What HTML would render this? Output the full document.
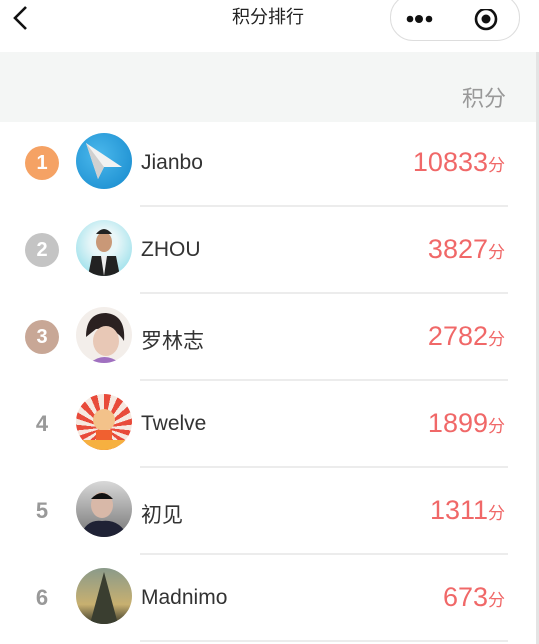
<!DOCTYPE html>
<html><head><meta charset="utf-8"><style>
body{margin:0;width:539px;height:644px;overflow:hidden;background:#fff;font-family:"Liberation Sans","Noto Sans CJK SC",sans-serif;position:relative}
.hdr{position:absolute;top:0;left:0;width:536px;height:52px;background:#fff}
.title{position:absolute;top:3px;left:0;width:536px;text-align:center;font-size:18px;color:#222}
.cap{position:absolute;left:390px;top:-6px;width:128px;height:45px;border:1px solid #ddd;border-radius:23px;background:#fff}
.band{position:absolute;top:52px;left:0;width:536px;height:70px;background:#f4f6f5}
.band span{position:absolute;right:30px;top:29px;font-size:22px;color:#999}
.rb{position:absolute;right:0;top:52px;width:3px;height:592px;background:#e4e4e4}
.row{position:absolute;left:0;width:536px;height:87px}
.badge{position:absolute;left:25px;top:26px;width:34px;height:34px;border-radius:50%;color:#fff;font-weight:bold;font-size:20px;text-align:center;line-height:34px}
.num{position:absolute;left:25px;top:26px;width:34px;text-align:center;line-height:34px;font-size:22px;font-weight:bold;color:#999}
.av{position:absolute;left:76px;top:13px;width:56px;height:56px;border-radius:50%;overflow:hidden}
.name{position:absolute;left:141px;top:31px;font-size:21px;color:#333}
.sc{position:absolute;right:31px;top:27px;font-size:27px;color:#f06868}
.sc small{font-size:17px}
.line{position:absolute;left:140px;width:368px;bottom:0;height:2px;background:#ececec}
</style></head><body>
<div class="hdr">
<svg style="position:absolute;left:10px;top:5px" width="20" height="26"><path d="M16 2 L5 13 L16 24" stroke="#111" stroke-width="2.6" fill="none"/></svg>
<div class="title">积分排行</div>
<div class="cap">
<svg style="position:absolute;left:15px;top:14px" width="110" height="30"><circle cx="4" cy="10" r="3.3" fill="#111"/><circle cx="13" cy="10" r="4" fill="#111"/><circle cx="23" cy="10" r="3.3" fill="#111"/><circle cx="80" cy="10" r="10" stroke="#111" stroke-width="2.6" fill="none"/><circle cx="80" cy="10" r="4.5" fill="#111"/></svg>
</div>
</div>
<div class="band"><span>积分</span></div>
<div class="rb"></div>

<div class="row" style="top:120px"><div class="badge" style="background:#f5a264">1</div><div class="av" style="background:radial-gradient(circle at 40% 40%,#4bb8ec,#1488cc)"><svg width="56" height="56"><path d="M10 10 L46 34 L28 34 L22 46 Z" fill="#f2f2f2"/><path d="M10 10 L28 34 L22 46 Z" fill="#d0d0d0"/></svg></div><div class="name">Jianbo</div><div class="sc">10833<small>分</small></div><div class="line"></div></div>

<div class="row" style="top:207px"><div class="badge" style="background:#c4c4c4">2</div><div class="av" style="background:radial-gradient(circle at 50% 40%,#e8f6f8 30%,#7fd8e6)"><svg width="56" height="56"><ellipse cx="28" cy="22" rx="8" ry="10" fill="#c99877"/><path d="M20 14 Q28 4 36 14 Z" fill="#222"/><path d="M12 56 L16 36 L40 36 L44 56 Z" fill="#222"/><path d="M25 36 L28 56 L31 36Z" fill="#eee"/></svg></div><div class="name">ZHOU</div><div class="sc">3827<small>分</small></div><div class="line"></div></div>

<div class="row" style="top:294px"><div class="badge" style="background:#c8a796">3</div><div class="av" style="background:#f3eeea"><svg width="56" height="56"><path d="M10 30 Q10 6 30 6 Q50 8 48 34 Q40 20 20 22Z" fill="#2a2020"/><ellipse cx="30" cy="34" rx="13" ry="15" fill="#e8c8b6"/><path d="M14 56 Q28 44 44 56Z" fill="#a070c0"/></svg></div><div class="name">罗林志</div><div class="sc">2782<small>分</small></div><div class="line"></div></div>

<div class="row" style="top:381px"><div class="num">4</div><div class="av" style="background:repeating-conic-gradient(from 0deg at 50% 60%,#e84a3a 0 12deg,#f6e8e0 12deg 24deg)"><svg width="56" height="56"><circle cx="28" cy="26" r="11" fill="#f3c28a"/><rect x="20" y="36" width="16" height="20" fill="#f06030"/><rect x="0" y="46" width="56" height="10" fill="#f6b040"/></svg></div><div class="name">Twelve</div><div class="sc">1899<small>分</small></div><div class="line"></div></div>

<div class="row" style="top:468px"><div class="num">5</div><div class="av" style="background:linear-gradient(#d8d8d8,#777)"><svg width="56" height="56"><ellipse cx="26" cy="24" rx="11" ry="13" fill="#d8b8a8"/><path d="M15 18 Q26 6 37 18 Z" fill="#111"/><path d="M4 56 Q10 38 26 40 Q44 38 52 56Z" fill="#1f2235"/></svg></div><div class="name">初见</div><div class="sc">1311<small>分</small></div><div class="line"></div></div>

<div class="row" style="top:555px"><div class="num">6</div><div class="av" style="background:linear-gradient(#8a9a8a,#c8b070 65%,#3a3a2a)"><svg width="56" height="56"><path d="M28 4 L42 56 L14 56Z" fill="#3a3e30"/></svg></div><div class="name">Madnimo</div><div class="sc">673<small>分</small></div><div class="line"></div></div>
</body></html>
